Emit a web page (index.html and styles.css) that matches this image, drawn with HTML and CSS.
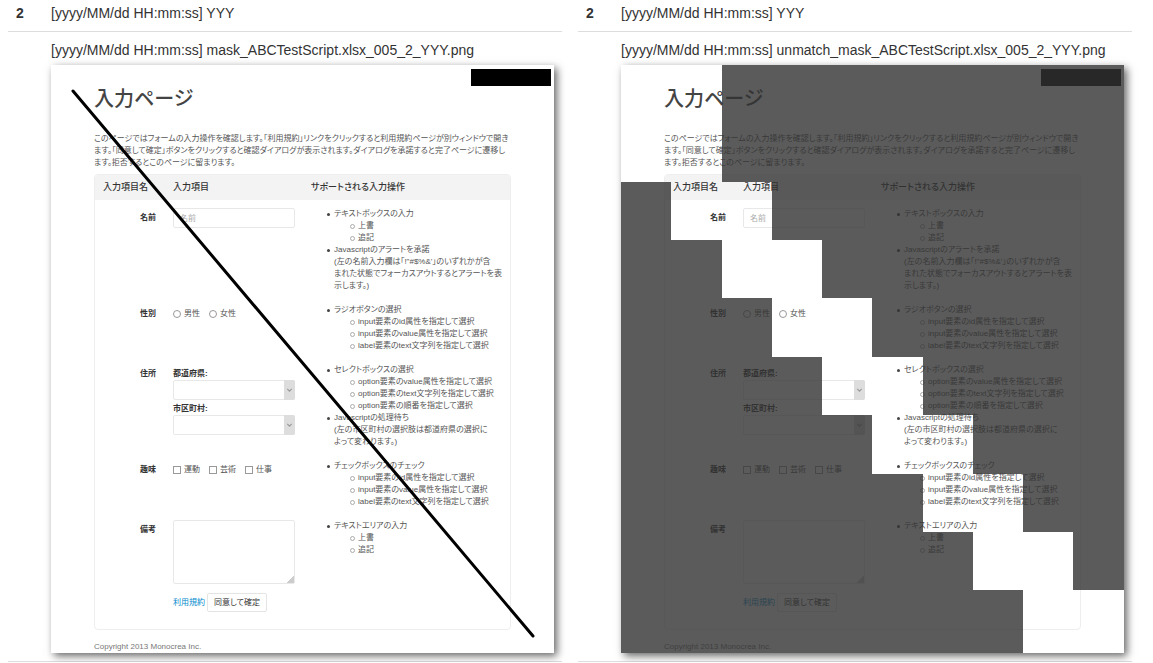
FILE: index.html
```html
<!DOCTYPE html>
<html lang="ja">
<head>
<meta charset="utf-8">
<title>Screenshot comparison</title>
<link rel="stylesheet" href="styles.css">
</head>
<body>
<main class="compare">
  <table class="log">
    <tr><th class="log-no" scope="row">2</th><td class="log-cell">[yyyy/MM/dd HH:mm:ss] YYY</td></tr>
    <tr><th class="log-no"></th><td class="log-cell">[yyyy/MM/dd HH:mm:ss] mask_ABCTestScript.xlsx_005_2_YYY.png
      <section class="capture">
        <h1 class="title">入力ページ</h1>
        <p class="intro">このページではフォームの入力操作を確認します。「利用規約」リンクをクリックすると利用規約ページが別ウィンドウで開き<br>ます。「同意して確定」ボタンをクリックすると確認ダイアログが表示されます。ダイアログを承諾すると完了ページに遷移し<br>ます。拒否するとこのページに留まります。</p>
        <form class="panel">
          <table class="form">
            <thead><tr><th class="col-name">入力項目名</th><th class="col-field">入力項目</th><th class="col-help">サポートされる入力操作</th></tr></thead>
            <tbody>
              <tr><th scope="row"><label for="a-name">名前</label></th>
                <td><input class="text" id="a-name" type="text" placeholder="名前"></td>
                <td><ul class="help"><li>テキストボックスの入力<ul><li>上書</li><li>追記</li></ul></li><li>Javascriptのアラートを承諾<br>(左の名前入力欄は「!"#$%&amp;'」のいずれかが含<br>まれた状態でフォーカスアウトするとアラートを表<br>示します。)</li></ul></td></tr>
              <tr><th scope="row">性別</th>
                <td><div class="choices"><label class="choice"><input class="radio" type="radio" name="a-sex">男性</label><label class="choice"><input class="radio" type="radio" name="a-sex">女性</label></div></td>
                <td><ul class="help"><li>ラジオボタンの選択<ul><li>input要素のid属性を指定して選択</li><li>input要素のvalue属性を指定して選択</li><li>label要素のtext文字列を指定して選択</li></ul></li></ul></td></tr>
              <tr><th scope="row">住所</th>
                <td><div class="address"><label for="a-pref">都道府県:</label><div class="drop"><select id="a-pref"><option></option></select><svg class="arrow" viewBox="0 0 10 18"><path d="M3 8l2 2 2-2"/></svg></div><label class="second" for="a-city">市区町村:</label><div class="drop"><select id="a-city"><option></option></select><svg class="arrow" viewBox="0 0 10 18"><path d="M3 8l2 2 2-2"/></svg></div></div></td>
                <td><ul class="help"><li>セレクトボックスの選択<ul><li>option要素のvalue属性を指定して選択</li><li>option要素のtext文字列を指定して選択</li><li>option要素の順番を指定して選択</li></ul></li><li>Javascriptの処理待ち<br>(左の市区町村の選択肢は都道府県の選択に<br>よって変わります。)</li></ul></td></tr>
              <tr><th scope="row">趣味</th>
                <td><div class="choices"><label class="choice"><input class="check" type="checkbox">運動</label><label class="choice"><input class="check" type="checkbox">芸術</label><label class="choice"><input class="check" type="checkbox">仕事</label></div></td>
                <td><ul class="help"><li>チェックボックスのチェック<ul><li>input要素のid属性を指定して選択</li><li>input要素のvalue属性を指定して選択</li><li>label要素のtext文字列を指定して選択</li></ul></li></ul></td></tr>
              <tr><th scope="row"><label for="a-note">備考</label></th>
                <td><textarea class="note" id="a-note"></textarea><div class="actions"><a class="terms" href="#">利用規約</a><button class="submit" type="button">同意して確定</button></div></td>
                <td><ul class="help"><li>テキストエリアの入力<ul><li>上書</li><li>追記</li></ul></li></ul></td></tr>
            </tbody>
          </table>
        </form>
        <p class="copyright">Copyright 2013 Monocrea Inc.</p>
        <div class="blackout"></div>
        <svg class="overlay" viewBox="0 0 503 588" preserveAspectRatio="none"><path class="stroke" d="M22 26L482 571"/></svg>
      </section>
    </td></tr>
  </table>

  <table class="log">
    <tr><th class="log-no" scope="row">2</th><td class="log-cell">[yyyy/MM/dd HH:mm:ss] YYY</td></tr>
    <tr><th class="log-no"></th><td class="log-cell">[yyyy/MM/dd HH:mm:ss] unmatch_mask_ABCTestScript.xlsx_005_2_YYY.png
      <section class="capture">
        <h1 class="title">入力ページ</h1>
        <p class="intro">このページではフォームの入力操作を確認します。「利用規約」リンクをクリックすると利用規約ページが別ウィンドウで開き<br>ます。「同意して確定」ボタンをクリックすると確認ダイアログが表示されます。ダイアログを承諾すると完了ページに遷移し<br>ます。拒否するとこのページに留まります。</p>
        <form class="panel">
          <table class="form">
            <thead><tr><th class="col-name">入力項目名</th><th class="col-field">入力項目</th><th class="col-help">サポートされる入力操作</th></tr></thead>
            <tbody>
              <tr><th scope="row"><label for="b-name">名前</label></th>
                <td><input class="text" id="b-name" type="text" placeholder="名前"></td>
                <td><ul class="help"><li>テキストボックスの入力<ul><li>上書</li><li>追記</li></ul></li><li>Javascriptのアラートを承諾<br>(左の名前入力欄は「!"#$%&amp;'」のいずれかが含<br>まれた状態でフォーカスアウトするとアラートを表<br>示します。)</li></ul></td></tr>
              <tr><th scope="row">性別</th>
                <td><div class="choices"><label class="choice"><input class="radio" type="radio" name="b-sex">男性</label><label class="choice"><input class="radio" type="radio" name="b-sex">女性</label></div></td>
                <td><ul class="help"><li>ラジオボタンの選択<ul><li>input要素のid属性を指定して選択</li><li>input要素のvalue属性を指定して選択</li><li>label要素のtext文字列を指定して選択</li></ul></li></ul></td></tr>
              <tr><th scope="row">住所</th>
                <td><div class="address"><label for="b-pref">都道府県:</label><div class="drop"><select id="b-pref"><option></option></select><svg class="arrow" viewBox="0 0 10 18"><path d="M3 8l2 2 2-2"/></svg></div><label class="second" for="b-city">市区町村:</label><div class="drop"><select id="b-city"><option></option></select><svg class="arrow" viewBox="0 0 10 18"><path d="M3 8l2 2 2-2"/></svg></div></div></td>
                <td><ul class="help"><li>セレクトボックスの選択<ul><li>option要素のvalue属性を指定して選択</li><li>option要素のtext文字列を指定して選択</li><li>option要素の順番を指定して選択</li></ul></li><li>Javascriptの処理待ち<br>(左の市区町村の選択肢は都道府県の選択に<br>よって変わります。)</li></ul></td></tr>
              <tr><th scope="row">趣味</th>
                <td><div class="choices"><label class="choice"><input class="check" type="checkbox">運動</label><label class="choice"><input class="check" type="checkbox">芸術</label><label class="choice"><input class="check" type="checkbox">仕事</label></div></td>
                <td><ul class="help"><li>チェックボックスのチェック<ul><li>input要素のid属性を指定して選択</li><li>input要素のvalue属性を指定して選択</li><li>label要素のtext文字列を指定して選択</li></ul></li></ul></td></tr>
              <tr><th scope="row"><label for="b-note">備考</label></th>
                <td><textarea class="note" id="b-note"></textarea><div class="actions"><a class="terms" href="#">利用規約</a><button class="submit" type="button">同意して確定</button></div></td>
                <td><ul class="help"><li>テキストエリアの入力<ul><li>上書</li><li>追記</li></ul></li></ul></td></tr>
            </tbody>
          </table>
        </form>
        <p class="copyright">Copyright 2013 Monocrea Inc.</p>
        <div class="blackout"></div>
        <svg class="overlay" viewBox="0 0 503 588" preserveAspectRatio="none"><path class="shade" d="M101 0H503V525H452V467H402V409H352V350H302V292H251V233H201V175H151V117H101ZM0 117H50V175H101V233H151V292H201V350H251V409H302V467H352V525H402V588H0Z"/></svg>
      </section>
    </td></tr>
  </table>
</main>
</body>
</html>
```
FILE: styles.css
```css
*,
*::before { box-sizing: border-box; }

body {
  margin: 0;
  background: #fff;
  color: #333;
  font: 14px/20px "Liberation Sans", "Noto Sans CJK JP", sans-serif;
}

.compare {
  display: grid;
  grid-template-columns: 1fr 1fr;
  gap: 16px;
  align-items: start;
  padding: 0 21px 0 8px;
}

table {
  width: 100%;
  border-collapse: separate;
  border-spacing: 0;
  table-layout: fixed;
}

/* Log rows */
.log-no,
.log-cell {
  padding: 8px;
  border-bottom: 1px solid #ddd;
  text-align: left;
  vertical-align: top;
}
.log-no { width: 35px; }
.log-cell { white-space: nowrap; }
.log tr:first-child > .log-no,
.log tr:first-child > .log-cell { padding-top: 3px; }

/* Captured page */
.capture {
  position: relative;
  margin-top: 5px;
  padding: 22px 43px 0;
  background: #fff;
  box-shadow: 3px 3px 8px rgba(0, 0, 0, 0.6);
  color: #555;
  font-size: 8px;
  line-height: 12px;
  font-feature-settings: "palt";
}
.title {
  margin: 0 0 22px;
  color: #444;
  font-size: 20px;
  font-weight: 500;
  line-height: 24px;
}
.intro { margin: 0 0 5px; }
.panel {
  margin: 0;
  border: 1px solid #eee;
  border-radius: 4px;
  overflow: hidden;
}
.form th,
.form td { padding: 8px; text-align: left; vertical-align: top; }
.form thead th {
  padding: 6px 8px 7px;
  background: #f3f3f3;
  color: #333;
  font-size: 9px;
  font-weight: 500;
}
.form .col-name { width: 70px; }
.form .col-field { width: 138px; }
.form tbody th {
  padding: 12px 9px 4px;
  color: #333;
  text-align: right;
}
.form tbody td { padding-bottom: 4px; }
.form tbody tr:last-child td { padding-bottom: 17px; }

.text,
.drop select,
.note {
  display: block;
  width: 100%;
  margin: 0;
  border: 1px solid #e8e8e8;
  border-radius: 2px;
  background: #fff;
  font: inherit;
}
.text { height: 20px; padding: 0 6px; }
.text::placeholder { color: #aaa; }
.note { height: 64px; }
.note::-webkit-resizer {
  background: linear-gradient(135deg, transparent 75%, #ccc 75%);
}

.choices { display: flex; gap: 9px; padding-top: 4px; }
.choice { display: flex; align-items: center; gap: 3px; }
.radio,
.check {
  appearance: none;
  width: 8px;
  height: 8px;
  margin: 0;
  border: 1px solid #999;
  background: #fff;
}
.radio { border-radius: 50%; }

.address { padding-top: 4px; color: #333; font-weight: 700; }
.address label { display: block; }
.address .second { margin-top: 3px; }
.drop { position: relative; }
.drop select { height: 20px; appearance: none; }
.arrow {
  position: absolute;
  top: 0;
  right: 0;
  width: 11px;
  height: 20px;
  border-radius: 0 2px 2px 0;
  background: #ddd;
  fill: none;
  stroke: #999;
  pointer-events: none;
}

.help,
.help ul { margin: 0; list-style: none; }
.help { padding-left: 23px; }
.help ul { padding-left: 24px; }
.help li { position: relative; }
.help li::before {
  content: "";
  position: absolute;
  top: 5px;
  left: -7px;
  width: 3px;
  height: 3px;
  border-radius: 50%;
  background: #444;
}
.help ul li::before {
  top: 4px;
  left: -8px;
  width: 5px;
  height: 5px;
  border: 1px solid #aaa;
  background: none;
}

.actions { display: flex; align-items: center; gap: 2px; margin-top: 9px; }
.terms { color: #08c; text-decoration: none; }
.submit {
  height: 19px;
  padding: 0 6px;
  border: 1px solid #e4e4e4;
  border-radius: 2px;
  background: #fff;
  color: #333;
  font: inherit;
  font-feature-settings: inherit;
}
.copyright { margin: 11px 0 0; color: #777; }

/* Layers over the captured page */
.blackout {
  position: absolute;
  top: 4px;
  right: 3px;
  width: 80px;
  height: 17px;
  background: #000;
}
.overlay {
  position: absolute;
  top: 0;
  left: 0;
  width: 100%;
  height: 100%;
  pointer-events: none;
}
.stroke { fill: none; stroke: #000; stroke-width: 3; stroke-linecap: round; }
.shade { fill: #323232; fill-opacity: 0.8; }
```
